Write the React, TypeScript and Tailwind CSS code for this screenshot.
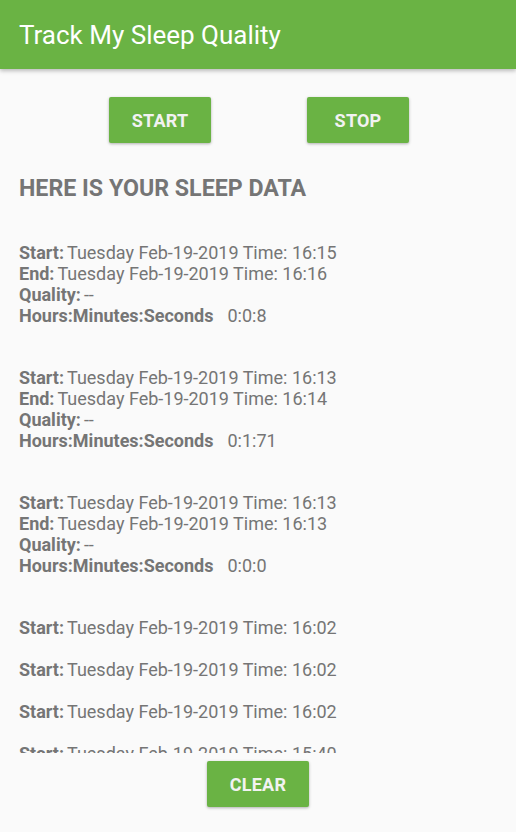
import React from "react";

const font = { fontFamily: "Roboto, 'Noto Sans', sans-serif" };

type Item = { start: string; end?: string; hms?: string };

const items: Item[] = [
  { start: "Tuesday Feb-19-2019 Time: 16:15", end: "Tuesday Feb-19-2019 Time: 16:16", hms: "0:0:8" },
  { start: "Tuesday Feb-19-2019 Time: 16:13", end: "Tuesday Feb-19-2019 Time: 16:14", hms: "0:1:71" },
  { start: "Tuesday Feb-19-2019 Time: 16:13", end: "Tuesday Feb-19-2019 Time: 16:13", hms: "0:0:0" },
  { start: "Tuesday Feb-19-2019 Time: 16:02" },
  { start: "Tuesday Feb-19-2019 Time: 16:02" },
  { start: "Tuesday Feb-19-2019 Time: 16:02" },
  { start: "Tuesday Feb-19-2019 Time: 15:40" },
  { start: "Tuesday Feb-19-2019 Time: 15:38" },
];

function Btn({ label }: { label: string }) {
  return (
    <button className="w-[102px] h-[46px] rounded-[2px] bg-[#6ab344] text-[#f2f2f2] text-[18px] font-bold tracking-[0.2px] shadow-[0_1px_3px_rgba(0,0,0,0.3)]">
      {label}
    </button>
  );
}

export default function App() {
  return (
    <div className="w-[516px] h-[832px] bg-[#fafafa] flex flex-col overflow-hidden" style={font}>
      <div className="h-[69px] shrink-0 bg-[#6ab344] flex items-center px-[19px] shadow-[0_2px_4px_rgba(0,0,0,0.25)] relative z-10">
        <span className="text-white text-[26px] leading-none">Track My Sleep Quality</span>
      </div>
      <div className="flex mt-[28px] pl-[109px] gap-[96px] shrink-0">
        <Btn label="START" />
        <Btn label="STOP" />
      </div>
      <div className="mt-[32px] px-[19px] text-[23.2px] font-bold text-[#757575] leading-[26px] shrink-0">
        HERE IS YOUR SLEEP DATA
      </div>
      <div className="flex-1 overflow-hidden pt-[41px] px-[19px] text-[18px] leading-[21px] text-[#757575]">
        {items.map((it, i) => (
          <div key={i} className={it.end ? "mb-[41px]" : "mb-[21px]"}>
            <div>
              <span className="font-bold mr-[3px]">Start:</span>
              {it.start}
            </div>
            {it.end && (
              <>
                <div>
                  <span className="font-bold mr-[3px]">End:</span>
                  {it.end}
                </div>
                <div>
                  <span className="font-bold mr-[3px]">Quality:</span>
                  --
                </div>
                <div>
                  <span className="font-bold">Hours:Minutes:Seconds</span>
                  <span className="ml-[14px]">{it.hms}</span>
                </div>
              </>
            )}
          </div>
        ))}
      </div>
      <div className="shrink-0 flex justify-center pt-[8px] pb-[25px]">
        <Btn label="CLEAR" />
      </div>
    </div>
  );
}
